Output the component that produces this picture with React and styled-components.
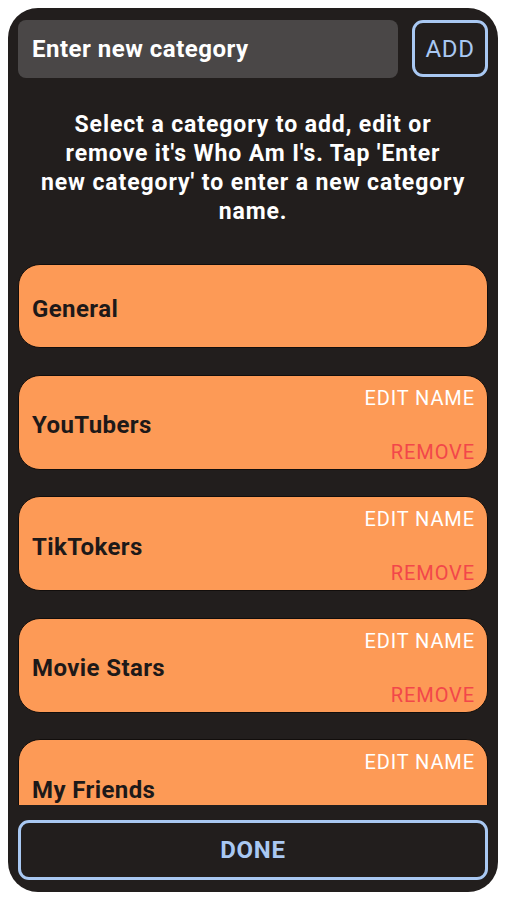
import React from 'react'
import styled, { createGlobalStyle } from 'styled-components'

const GlobalStyle = createGlobalStyle`
  body {
    margin: 0;
    background: #ffffff;
    font-family: Roboto, 'Liberation Sans', sans-serif;
  }
`

const Panel = styled.div`
  box-sizing: border-box;
  margin: 8px;
  width: 490px;
  height: 884px;
  border-radius: 30px;
  background: #221e1d;
  padding: 12px 10px 12px 10px;
  display: flex;
  flex-direction: column;
`

const Header = styled.div`
  display: flex;
  gap: 14px;
  align-items: flex-start;
`

const Input = styled.div`
  box-sizing: border-box;
  width: 382px;
  height: 58px;
  border-radius: 8px;
  background: #4a4747;
  color: #ffffff;
  font-size: 24px;
  font-weight: 700;
  letter-spacing: 0.5px;
  display: flex;
  align-items: center;
  padding-left: 14px;
`

const OutlineButton = styled.button`
  box-sizing: border-box;
  height: ${props => props.h}px;
  width: ${props => props.w ? props.w + 'px' : '100%'};
  border: 3px solid #a9c8f2;
  border-radius: 11px;
  background: transparent;
  color: #a9c8f2;
  font-family: Roboto, 'Liberation Sans', sans-serif;
  font-size: 24px;
  font-weight: ${props => props.bold ? 700 : 400};
  letter-spacing: 0.7px;
  padding: 0;
`

const Description = styled.p`
  margin: 32px 0 0;
  text-align: center;
  color: #ffffff;
  font-size: 23px;
  font-weight: 700;
  letter-spacing: 0.9px;
  line-height: 29px;
  white-space: nowrap;
`

const List = styled.div`
  margin-top: 38px;
  flex: 1;
  overflow: hidden;
  display: flex;
  flex-direction: column;
  gap: 26.5px;
`

const Card = styled.div`
  box-sizing: border-box;
  flex-shrink: 0;
  height: ${props => props.plain ? 84 : 95}px;
  border-radius: 22px;
  background: #fd9a56;
  border: 1px solid #120e0c;
  padding: 11px 12px 5px 13px;
  display: flex;
  align-items: center;
  justify-content: space-between;
`

const Name = styled.span`
  font-size: 24px;
  font-weight: 700;
  letter-spacing: 0.4px;
  color: #1d1919;
`

const Actions = styled.div`
  align-self: stretch;
  display: flex;
  flex-direction: column;
  align-items: flex-end;
  justify-content: space-between;
`

const Action = styled.span`
  font-size: 20px;
  line-height: 23px;
  letter-spacing: 0.9px;
  color: ${props => props.danger ? '#f2474a' : '#ffffff'};
`

const Footer = styled.div`
  margin-top: 15px;
`

const categories = ['YouTubers', 'TikTokers', 'Movie Stars', 'My Friends']

export default function App() {
  return (
    <>
      <GlobalStyle />
      <Panel>
        <Header>
          <Input>Enter new category</Input>
          <OutlineButton w={76} h={57}>ADD</OutlineButton>
        </Header>
        <Description>
          Select a category to add, edit or<br />
          remove it's Who Am I's. Tap 'Enter<br />
          new category' to enter a new category<br />
          name.
        </Description>
        <List>
          <Card plain>
            <Name>General</Name>
          </Card>
          {categories.map(name => (
            <Card key={name}>
              <Name>{name}</Name>
              <Actions>
                <Action>EDIT NAME</Action>
                <Action danger>REMOVE</Action>
              </Actions>
            </Card>
          ))}
        </List>
        <Footer>
          <OutlineButton h={60} bold>DONE</OutlineButton>
        </Footer>
      </Panel>
    </>
  )
}
